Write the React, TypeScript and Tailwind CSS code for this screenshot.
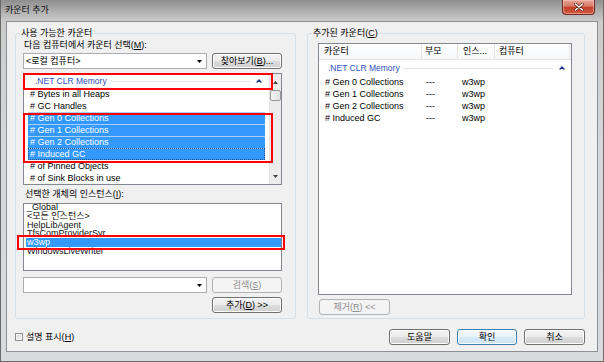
import React from "react";

function Btn({
  children,
  className = "",
  disabled,
  primary,
}: {
  children: React.ReactNode;
  className?: string;
  disabled?: boolean;
  primary?: boolean;
}) {
  let cls =
    "border-[#707070] bg-[linear-gradient(#f2f2f2,#ebebeb_50%,#dddddd_50%,#cfcfcf)] shadow-[inset_0_0_0_1px_#fcfcfc] text-black";
  if (disabled) cls = "border-[#adb2b5] bg-[#f4f4f4] text-[#8d8d8d]";
  else if (primary)
    cls =
      "border-[#3c7fb1] bg-[linear-gradient(#f3f9fd,#e8f2fa_50%,#d9eaf6_50%,#cfe3f3)] shadow-[inset_0_0_0_1px_#f6fbfe] text-black";
  return (
    <div
      className={`h-[16px] flex items-center justify-center rounded-[3px] border leading-[12px] whitespace-nowrap ${cls} ${className}`}
    >
      {children}
    </div>
  );
}

function DownArrow() {
  return (
    <svg width="5" height="3" viewBox="0 0 5 3" className="shrink-0">
      <polygon points="0,0 5,0 2.5,3" fill="#000" />
    </svg>
  );
}

function Chevron() {
  return (
    <svg width="6" height="4" viewBox="0 0 6 4" className="shrink-0">
      <path d="M0.6 3.4 L3 1 L5.4 3.4" stroke="#1c3a8c" strokeWidth="1.4" fill="none" />
    </svg>
  );
}

const counters = [
  { t: "# Bytes in all Heaps" },
  { t: "# GC Handles" },
  { t: "# Gen 0 Collections", s: true },
  { t: "# Gen 1 Collections", s: true },
  { t: "# Gen 2 Collections", s: true },
  { t: "# Induced GC", s: true, f: true },
  { t: "# of Pinned Objects" },
  { t: "# of Sink Blocks in use" },
];

const instances = [
  { t: "_Global_" },
  { t: "<모든 인스턴스>" },
  { t: "HelpLibAgent" },
  { t: "TfsComProviderSvr" },
  { t: "w3wp", s: true },
  { t: "WindowsLiveWriter" },
];

const added = [
  "# Gen 0 Collections",
  "# Gen 1 Collections",
  "# Gen 2 Collections",
  "# Induced GC",
];

export default function App() {
  return (
    <div className="w-[604px] h-[362px] flex flex-col bg-[linear-gradient(#8e8e8e,#b9b9b9_4%,#cbcbcb_6%,#d5d7da_40%,#d8dadd)] border-x border-b border-[#6a6a6a] font-['Liberation_Sans','Noto_Sans_CJK_KR',sans-serif] text-[9px] leading-[12px] text-black overflow-hidden">
      {/* Title bar */}
      <div className="h-[21px] flex items-start shrink-0">
        <div className="pl-[4px] pt-[4px] leading-[12px] text-[#111]">카운터 추가</div>
        <div className="ml-auto mr-[8px] w-[33px] h-[15px] rounded-b-[4px] border border-t-0 border-[#6e2a22] bg-[linear-gradient(#e6a496,#d77a66_45%,#c43f2c_50%,#cf5a3e)] flex items-center justify-center shadow-[inset_0_0_0_1px_rgba(255,210,200,0.5)]">
          <svg width="10" height="8" viewBox="0 0 10 8">
            <path d="M1.5 1 L8.5 7 M8.5 1 L1.5 7" stroke="#5a1a12" strokeWidth="2.8" strokeLinecap="round" />
            <path d="M1.5 1 L8.5 7 M8.5 1 L1.5 7" stroke="#ffffff" strokeWidth="1.6" strokeLinecap="round" />
          </svg>
        </div>
      </div>

      {/* Client area */}
      <div className="ml-[5px] w-[592px] h-[331px] border border-[#8b9097] bg-[#f0f0f0] pt-[11px] pl-[8px] pr-[12px] flex flex-col shrink-0">
        <div className="flex gap-[11px]">
          {/* Left group */}
          <div className="relative w-[281px] h-[286px] border border-[#d5dfe5] rounded-[3px] flex flex-col pl-[7px] pr-[13px]">
            <div className="absolute left-[4px] -top-[7px] px-[1px] bg-[#f0f0f0] leading-[12px]">사용 가능한 카운터</div>
            <div className="mt-[5px] pl-[1px] h-[12px]">
              다음 컴퓨터에서 카운터 선택(<span className="underline">M</span>):
            </div>
            <div className="mt-[2px] flex h-[16px]">
              <div className="w-[184px] h-[16px] border border-[#abadb3] bg-white flex items-center pl-[2px] pr-[4px]">
                <span className="flex-1">&lt;로컬 컴퓨터&gt;</span>
                <DownArrow />
              </div>
              <Btn className="ml-[5px] w-[70px]">
                찾아보기(<span className="underline">B</span>)...
              </Btn>
            </div>

            {/* Counter list */}
            <div className="relative mt-[4px] h-[112px] w-[259px] border border-[#828790] bg-white flex">
              <div className="flex-1 flex flex-col">
                <div className="h-[15px] flex items-center pl-[11px] pr-[7px]">
                  <span className="text-[#2f4fbf] text-[8.5px]">.NET CLR Memory</span>
                  <div className="flex-1 h-px bg-[#dfe6ef] ml-[4px] mr-[5px]" />
                  <Chevron />
                </div>
                {counters.map((c) => (
                  <div
                    key={c.t}
                    className={
                      c.s
                        ? `h-[12px] mx-[4px] pl-[2px] leading-[11px] whitespace-nowrap bg-[#3399ff] text-white border-t border-[#a9d1f7] ${c.f ? "outline-1 outline-dotted outline-[#244f80] -outline-offset-1" : ""}`
                        : "h-[12px] mx-[4px] pl-[2px] leading-[12px] whitespace-nowrap"
                    }
                  >
                    {c.t}
                  </div>
                ))}
              </div>
              {/* Scrollbar */}
              <div className="w-[12px] h-full bg-[#ececec] border-l border-[#e4e4e4] flex flex-col items-center">
                <div className="h-[16px] w-full flex items-center justify-center">
                  <svg width="5" height="3" viewBox="0 0 5 3">
                    <polygon points="0,3 5,3 2.5,0" fill="#404040" />
                  </svg>
                </div>
                <div className="w-[11px] h-[11px] rounded-[2px] border border-[#969696] bg-[linear-gradient(90deg,#f4f4f4,#e2e2e2)]" />
                <div className="flex-1" />
                <div className="h-[15px] w-full flex items-center justify-center">
                  <svg width="5" height="3" viewBox="0 0 5 3">
                    <polygon points="0,0 5,0 2.5,3" fill="#404040" />
                  </svg>
                </div>
              </div>
              <div className="absolute left-[-1px] top-[-1px] w-[250px] h-[17px] border-2 border-[#ff0000]" />
              <div className="absolute left-[-1px] top-[39px] w-[250px] h-[50px] border-2 border-[#ff0000]" />
            </div>

            <div className="mt-[3px] h-[12px] pl-[2px]">
              선택한 개체의 인스턴스(<span className="underline">I</span>):
            </div>

            {/* Instance list */}
            <div className="relative mt-[3px] h-[68px] w-[259px] border border-[#828790] bg-white">
              <div className="-mt-px">
                {instances.map((it) => (
                  <div
                    key={it.t}
                    className={
                      it.s
                        ? "relative h-[8.8px] ml-[2px] pl-[1px] leading-[8.8px] whitespace-nowrap bg-[#3399ff] text-white"
                        : "h-[8.8px] ml-[2px] pl-[1px] leading-[8.8px] whitespace-nowrap text-[#111]"
                    }
                  >
                    {it.t}
                  </div>
                ))}
              </div>
              <div className="absolute left-[-7px] top-[31px] w-[268px] h-[15px] border-2 border-[#ff0000]" />
            </div>

            <div className="mt-[6px] flex h-[16px]">
              <div className="w-[184px] h-[16px] border border-[#abadb3] bg-white flex items-center justify-end pr-[4px]">
                <DownArrow />
              </div>
              <Btn className="ml-[5px] w-[70px]" disabled>
                검색(<span className="underline">S</span>)
              </Btn>
            </div>
            <div className="mt-[4px] flex justify-end">
              <Btn className="w-[70px]">
                추가(<span className="underline">D</span>) &gt;&gt;
              </Btn>
            </div>
          </div>

          {/* Right group */}
          <div className="relative w-[278px] h-[286px] border border-[#d5dfe5] rounded-[3px] flex flex-col pl-[10px] pr-[12px]">
            <div className="absolute left-[4px] -top-[7px] px-[1px] bg-[#f0f0f0] leading-[12px]">
              추가된 카운터(<span className="underline">C</span>)
            </div>
            <div className="mt-[9px] h-[252px] w-[254px] border border-[#828790] bg-white flex flex-col">
              <div className="h-[16px] flex border-b border-[#e5e5e5] bg-[linear-gradient(#ffffff,#f6f7f9)] leading-[15px]">
                <div className="w-[103px] border-r border-[#e5e5e5] pl-[5px]">카운터</div>
                <div className="w-[36px] border-r border-[#e5e5e5] pl-[3px]">부모</div>
                <div className="w-[37px] border-r border-[#e5e5e5] pl-[5px]">인스...</div>
                <div className="w-[75px] border-r border-[#e5e5e5] pl-[4px]">컴퓨터</div>
              </div>
              <div className="h-[16px] flex items-center pl-[9px] pr-[6px]">
                <span className="text-[#2f4fbf] text-[8.5px]">.NET CLR Memory</span>
                <div className="flex-1 h-px bg-[#dfe6ef] ml-[4px] mr-[6px]" />
                <Chevron />
              </div>
              {added.map((a) => (
                <div key={a} className="h-[12px] flex leading-[12px] whitespace-nowrap">
                  <div className="w-[103px] pl-[6px]">{a}</div>
                  <div className="w-[36px] pl-[4px]">---</div>
                  <div className="pl-[4px]">w3wp</div>
                </div>
              ))}
            </div>
            <div className="mt-[4px] flex">
              <Btn className="ml-[1px] w-[71px]" disabled>
                제거(<span className="underline">R</span>) &lt;&lt;
              </Btn>
            </div>
          </div>
        </div>

        {/* Bottom row */}
        <div className="mt-[10px] h-[16px] flex items-center">
          <div className="w-[8px] h-[8px] border border-[#8f8f8f] bg-[linear-gradient(135deg,#d6d6d6,#f8f8f8)] shadow-[inset_0_0_0_1px_#f4f4f4]" />
          <div className="ml-[3px]">
            설명 표시(<span className="underline">H</span>)
          </div>
          <div className="ml-auto flex gap-[7px]">
            <Btn className="w-[61px]">도움말</Btn>
            <Btn className="w-[60px]" primary>
              확인
            </Btn>
            <Btn className="w-[61px]">취소</Btn>
          </div>
        </div>
      </div>
    </div>
  );
}
